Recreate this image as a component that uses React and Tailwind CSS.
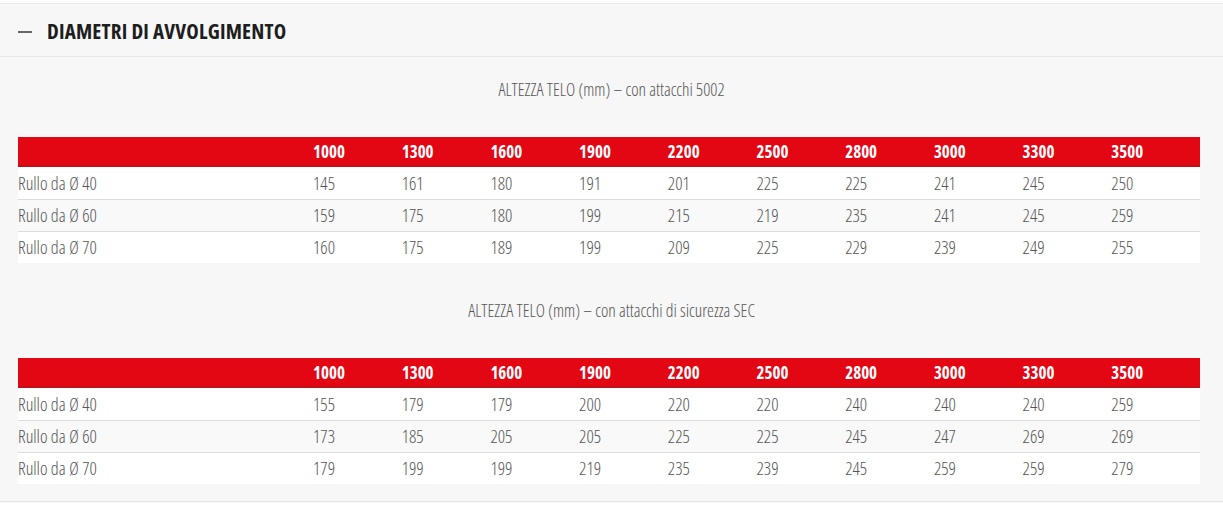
import React from "react";

const cols = ["1000", "1300", "1600", "1900", "2200", "2500", "2800", "3000", "3300", "3500"];

const tables = [
  {
    caption: "ALTEZZA TELO (mm) – con attacchi 5002",
    rows: [
      ["Rullo da Ø 40", "145", "161", "180", "191", "201", "225", "225", "241", "245", "250"],
      ["Rullo da Ø 60", "159", "175", "180", "199", "215", "219", "235", "241", "245", "259"],
      ["Rullo da Ø 70", "160", "175", "189", "199", "209", "225", "229", "239", "249", "255"],
    ],
  },
  {
    caption: "ALTEZZA TELO (mm) – con attacchi di sicurezza SEC",
    rows: [
      ["Rullo da Ø 40", "155", "179", "179", "200", "220", "220", "240", "240", "240", "259"],
      ["Rullo da Ø 60", "173", "185", "205", "205", "225", "225", "245", "247", "269", "269"],
      ["Rullo da Ø 70", "179", "199", "199", "219", "235", "239", "245", "259", "259", "279"],
    ],
  },
];

const font = { fontFamily: '"Open Sans", "Liberation Sans", sans-serif' };

const SizeTable = ({ caption, rows }) => {
  return (
    <div>
      <p className="text-center text-[17.5px] font-light text-[#555] [font-stretch:75%] h-[22px] leading-[22px]">
        {caption}
      </p>
      <div className="mt-[37px] ml-[18px] w-[1182px]">
        <div className="grid grid-cols-[295px_repeat(10,1fr)] bg-[#e30613] h-[30px] items-center border-b-2 border-[#c0101a] text-white font-bold text-[17px] [font-stretch:75%] pt-[1px]">
          <div />
          {cols.map((c) => (
            <div key={c}>{c}</div>
          ))}
        </div>
        {rows.map((r, i) => (
          <div
            key={i}
            className={
              "grid grid-cols-[295px_repeat(10,1fr)] h-[32px] items-center text-[18px] font-light text-[#555] [font-stretch:75%] " +
              (i === 1 ? "bg-[#f9f9f9] " : "bg-white ") +
              (i > 0 ? "border-t border-[#dcdcdc]" : "")
            }
          >
            {r.map((v, j) => (
              <div key={j}>{v}</div>
            ))}
          </div>
        ))}
      </div>
    </div>
  );
};

const App = () => {
  return (
    <div style={font} className="w-[1223px] h-[506px] bg-white pt-[3px]">
      <div className="bg-[#f7f7f7] border-t border-[#ececec] h-[500px] flex flex-col">
        <div className="flex items-center h-[53px] border-b border-[#e8e8e8] pl-[18px] pt-[3px]">
          <span className="w-[14px] h-[2px] bg-[#666]" />
          <h2 className="ml-[15px] text-[21px] font-bold text-[#1e1e1e] [font-stretch:75%] tracking-[0.2px]">
            DIAMETRI DI AVVOLGIMENTO
          </h2>
        </div>
        <div className="pt-[21px]">
          <SizeTable {...tables[0]} />
        </div>
        <div className="pt-[36px]">
          <SizeTable {...tables[1]} />
        </div>
        <div className="mt-auto border-b border-[#e8e8e8] mb-[1px]" />
      </div>
    </div>
  );
};

export default App;
